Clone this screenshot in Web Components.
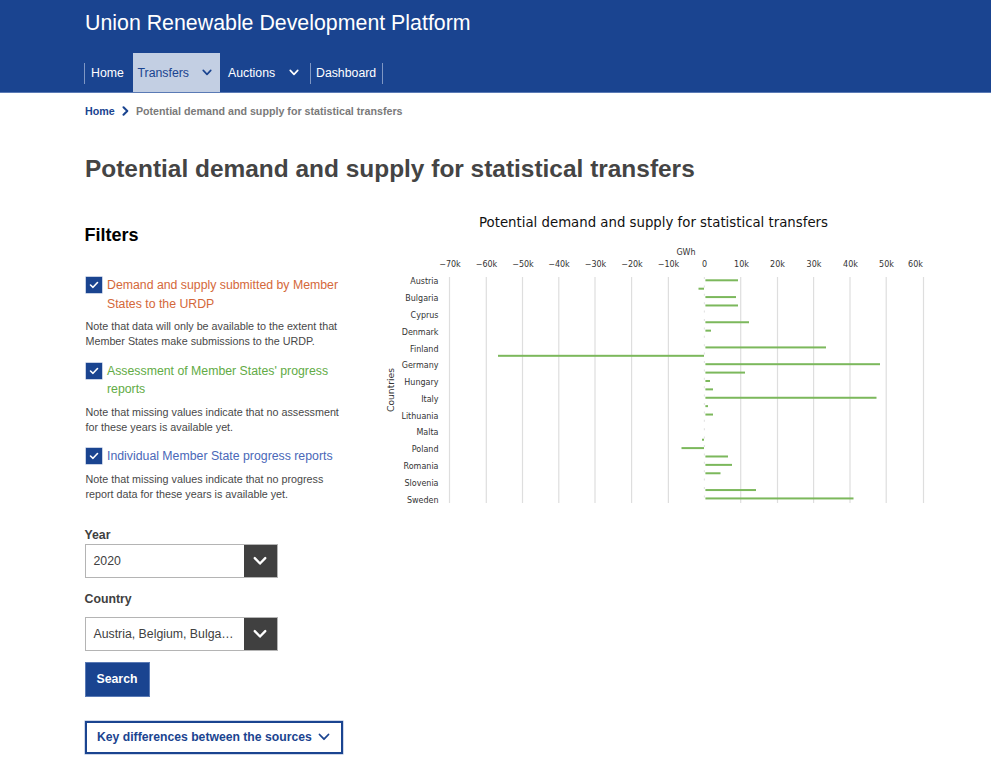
<!DOCTYPE html>
<html lang="en"><head><meta charset="utf-8"><title>URDP</title>
<style>
html,body{margin:0;padding:0;background:#fff;font-family:"Liberation Sans",Arial,sans-serif;color:#404040}
body{height:769px;overflow:hidden}
</style></head><body>
<urdp-header></urdp-header>
<urdp-breadcrumb></urdp-breadcrumb>
<urdp-page></urdp-page>
<script>
const chev=(w,h,c,sw)=>`<svg width="${w}" height="${h}" viewBox="0 0 12 8" fill="none" stroke="${c}" stroke-width="${sw}" stroke-linecap="round" stroke-linejoin="round"><path d="M1.5 1.5 6 6.2 10.5 1.5"/></svg>`;
class UrdpHeader extends HTMLElement{constructor(){super();this.attachShadow({mode:'open'}).innerHTML=`<style>
:host{display:block;background:#1a4490;height:92px;border-bottom:1px solid #5a7ab5;padding-left:84px;color:#fff}
.t{font-size:21.35px;line-height:24px;padding:11px 0 0 1px;height:24px;margin-bottom:18px}
nav{display:flex;height:39px;align-items:stretch}
.i{display:flex;align-items:center;font-size:12.3px;box-sizing:border-box}
.i span{display:block}
.sep{width:1px;background:#7f97c4;height:21px;align-self:center;margin-top:1px;flex:none}
.i.active{background:#c3cfe3;color:#1a4490}
.i svg{display:block}
</style>
<div class="t">Union Renewable Development Platform</div>
<nav>
<div class="sep"></div>
<div class="i" style="padding:0 0 0 6px;width:47.5px"><span>Home</span></div>
<div class="i active" style="padding-left:5px;width:87.5px"><span style="width:64px">Transfers</span><span>${chev(10,7,'#1a4490',2)}</span></div>
<div class="i" style="padding-left:8px;width:90px"><span style="width:60.5px">Auctions</span><span>${chev(10,7,'#fff',2)}</span></div>
<div class="sep"></div>
<div class="i" style="padding:0 6px 0 5px"><span>Dashboard</span></div>
<div class="sep"></div>
</nav>`}}
customElements.define('urdp-header',UrdpHeader);
class UrdpBreadcrumb extends HTMLElement{constructor(){super();this.attachShadow({mode:'open'}).innerHTML=`<style>
:host{display:flex;align-items:center;padding:11px 0 0 85px;height:13px;font-size:10.7px;font-weight:700;color:#7a7a7a}
a{color:#1a4490}
svg{margin:0 7px 0 7.2px;display:block}
</style><a>Home</a><svg width="7" height="10" viewBox="0 0 7 10" fill="none" stroke="#1a4490" stroke-width="2" stroke-linecap="round" stroke-linejoin="round"><path d="M1.5 1.2 5.3 5 1.5 8.8"/></svg><span>Potential demand and supply for statistical transfers</span>`}}
customElements.define('urdp-breadcrumb',UrdpBreadcrumb);
class UrdpFilter extends HTMLElement{constructor(){super();this.attachShadow({mode:'open'}).innerHTML=`<style>
:host{display:block;width:258px}
.r{display:flex;align-items:flex-start;gap:5px}
.c{width:16px;height:16px;background:#1a4490;flex:none;margin:1px 0 0 1.5px;display:flex;align-items:center;justify-content:center;box-shadow:0 0 0 .5px #8fa3cc}
.l{font-size:12.3px;line-height:18.5px;color:var(--c)}
.n{font-size:10.75px;line-height:15px;color:#484848;margin:6px 0 0 1px}
</style><div class="r"><div class="c"><svg width="10" height="8" viewBox="0 0 10 8" fill="none" stroke="#fff" stroke-width="1.6" stroke-linecap="round" stroke-linejoin="round"><path d="M1.5 4 4 6.3 8.5 1.5"/></svg></div><div class="l"><slot name="label"></slot></div></div><div class="n"><slot name="note"></slot></div>`}}
customElements.define('urdp-filter',UrdpFilter);
class UrdpSelect extends HTMLElement{constructor(){super();this.attachShadow({mode:'open'}).innerHTML=`<style>
:host{display:flex;width:193px;height:34px;box-sizing:border-box;border:1px solid #b4b4b4;font-size:12.3px;color:#404040}
.v{flex:1;display:flex;align-items:center;padding-left:8px;min-width:0;white-space:nowrap}
.b{width:33px;background:#404040;display:flex;align-items:center;justify-content:center}
</style><div class="v"><slot></slot></div><div class="b">${chev(14,10,'#fff',2)}</div>`}}
customElements.define('urdp-select',UrdpSelect);
class UrdpChart extends HTMLElement{constructor(){super();
const names=['Austria','Belgium','Bulgaria','Croatia','Cyprus','Czechia','Denmark','Estonia','Finland','France','Germany','Greece','Hungary','Ireland','Italy','Latvia','Lithuania','Luxembourg','Malta','Netherlands','Poland','Portugal','Romania','Slovakia','Slovenia','Spain','Sweden'];
const shown=new Set(['Austria','Bulgaria','Cyprus','Denmark','Finland','Germany','Hungary','Italy','Lithuania','Malta','Poland','Romania','Slovenia','Sweden']);
const ends=[738,698.5,736,738,704.5,749,711,704.5,826,498,880,745,710,713,876.5,708,713,704.5,704.5,702,681.5,728,732,720.5,704.5,756,853.5];
const ox=380,oy=210;
const ticks=[[-70,449.5,450],[-60,486.3,486.5],[-50,522.5,523],[-40,558.8,559],[-30,595,595.5],[-20,631.6,632],[-10,668.4,668.5],[0,704.4,704.5],[10,740.7,741.5],[20,777.5,777.5],[30,813.6,814],[40,850,850.5],[50,886.2,886.5],[60,923.5,915.5]];
let s='';
ticks.forEach(([k,x,lx])=>{const X=x-ox;s+=`<line x1="${X}" x2="${X}" y1="67" y2="293" stroke="${k==0?'#e4e4e4':'#dedede'}" stroke-width="1.2"${k==0?' stroke-dasharray="2 6.4"':''}/>`;
s+=`<text x="${lx-ox}" y="57" text-anchor="middle" class="a">${k<0?'\u2212'+(-k)+'k':k==0?'0':k+'k'}</text>`});
names.forEach((n,i)=>{const y=280.3+i*8.39-oy;
if(shown.has(n))s+=`<text x="58.5" y="${y+4.1}" text-anchor="end" class="a">${n}</text>`;
const e=ends[i]-ox,o=705-ox,left=e<o-.5;
const a=left?e:o+.4,b=left?o-1:e;
if(Math.abs(b-a)>.5)s+=`<rect x="${a}" y="${y-1}" width="${b-a}" height="2" fill="#7cb85c"/>`;
});
this.attachShadow({mode:'open'}).innerHTML=`<style>
:host{display:block;width:560px;height:300px}
svg{display:block}
text{font-family:"DejaVu Sans",Verdana,sans-serif;fill:#333}
.a{font-size:8px}
.ti{font-size:13.3px;fill:#111}
.y{font-size:9.2px}
</style><svg width="560" height="300" viewBox="0 0 560 300">
<text class="ti" x="273.5" y="16.5" text-anchor="middle">Potential demand and supply for statistical transfers</text>
<text class="a" x="306" y="44.5" text-anchor="middle">GWh</text>
<text class="y" transform="translate(13.5,180) rotate(-90)" text-anchor="middle">Countries</text>
${s}</svg>`}}
customElements.define('urdp-chart',UrdpChart);
class UrdpPage extends HTMLElement{constructor(){super();this.attachShadow({mode:'open'}).innerHTML=`<style>
:host{display:block;padding:38px 0 0 84.5px}
h1{margin:0;font-size:24.45px;line-height:28px;font-weight:700;color:#444;padding-left:.5px}
.g{display:flex;margin-top:35px}
.left{width:295.5px;flex:none}
h2{font-size:18px;line-height:22px;margin:0 0 30px;color:#000;padding:6px 0 0 0}
.f{display:flex;flex-direction:column;gap:12.5px}
.lab{font-size:12.3px;font-weight:700;line-height:15px;color:#404040}
button{font:inherit;font-weight:700;border:0;cursor:pointer}
.s{display:block;width:65px;height:35px;background:#1a4490;color:#fff;font-size:12.3px;border:1px solid #5a7ab5;box-sizing:border-box;margin-top:11px}
.k{display:flex;align-items:center;gap:6px;width:258px;height:33px;box-sizing:border-box;margin-top:24px;background:#fff;border:2px solid #1a4490;box-shadow:0 0 0 .5px #9db0d4;color:#1a4490;font-size:12.2px;padding:0 0 0 10.5px}
.right{margin-top:-8px}
</style>
<h1>Potential demand and supply for statistical transfers</h1>
<div class="g"><div class="left">
<h2>Filters</h2>
<div class="f">
<urdp-filter style="--c:#d4683a"><span slot="label">Demand and supply submitted by Member States to the URDP</span><span slot="note">Note that data will only be available to the extent that Member States make submissions to the URDP.</span></urdp-filter>
<urdp-filter style="--c:#62ab45"><span slot="label">Assessment of Member States' progress reports</span><span slot="note">Note that missing values indicate that no assessment for these years is available yet.</span></urdp-filter>
<urdp-filter style="--c:#4a68b8"><span slot="label">Individual Member State progress reports</span><span slot="note">Note that missing values indicate that no progress report data for these years is available yet.</span></urdp-filter>
</div>
<div class="lab" style="margin-top:26px;margin-bottom:1px">Year</div>
<urdp-select>2020</urdp-select>
<div class="lab" style="margin-top:14px;margin-bottom:10px">Country</div>
<urdp-select>Austria, Belgium, Bulga…</urdp-select>
<button class="s">Search</button>
<button class="k">Key differences between the sources ${chev(12,8,'#1a4490',1.8)}</button>
</div>
<div class="right"><urdp-chart></urdp-chart></div></div>`}}
customElements.define('urdp-page',UrdpPage);
</script></body></html>
